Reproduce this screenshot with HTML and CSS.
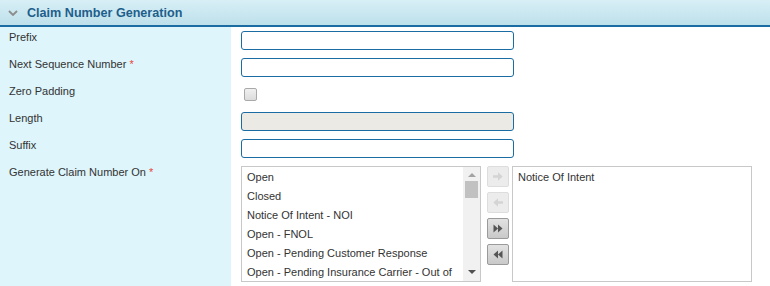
FILE: index.html
```html
<!DOCTYPE html>
<html lang="en">
<head>
  <meta charset="UTF-8">
  <title>Claim Number Generation</title>
  <link rel="stylesheet" href="styles.css">
</head>
<body>
  <div class="panel">
    <div class="panel-head">
      <svg class="chevron" width="10" height="6" viewBox="0 0 10 6"><path d="M1 1 L5 5 L9 1" fill="none" stroke="#8c8c8c" stroke-width="1.8"/></svg>
      <span class="panel-title">Claim Number Generation</span>
    </div>

    <div class="panel-body">
      <div class="row">
        <div class="label">Prefix</div>
        <div class="field"><input type="text" class="text-input"></div>
      </div>
      <div class="row">
        <div class="label">Next Sequence Number <span class="req">*</span></div>
        <div class="field"><input type="text" class="text-input"></div>
      </div>
      <div class="row">
        <div class="label">Zero Padding</div>
        <div class="field"><span class="checkbox"></span></div>
      </div>
      <div class="row">
        <div class="label">Length</div>
        <div class="field"><input type="text" class="text-input disabled" disabled></div>
      </div>
      <div class="row">
        <div class="label">Suffix</div>
        <div class="field"><input type="text" class="text-input"></div>
      </div>
      <div class="row last">
        <div class="label">Generate Claim Number On <span class="req">*</span></div>
        <div class="field picker">
          <div class="listbox">
            <ul class="items">
              <li>Open</li>
              <li>Closed</li>
              <li>Notice Of Intent - NOI</li>
              <li>Open - FNOL</li>
              <li>Open - Pending Customer Response</li>
              <li>Open - Pending Insurance Carrier - Out of</li>
            </ul>
            <div class="scrollbar">
              <span class="arrow-up"></span>
              <span class="thumb"></span>
              <span class="arrow-down"></span>
            </div>
          </div>

          <div class="move-buttons">
            <button class="move-btn" disabled>
              <svg width="10" height="9" viewBox="0 0 10 9"><path d="M0 3.2 H5 V0.3 L9.7 4.5 L5 8.7 V5.8 H0 Z" fill="#d4d4d4"/></svg>
            </button>
            <button class="move-btn" disabled>
              <svg width="10" height="9" viewBox="0 0 10 9"><path d="M10 3.2 H5 V0.3 L0.3 4.5 L5 8.7 V5.8 H10 Z" fill="#d4d4d4"/></svg>
            </button>
            <button class="move-btn active">
              <svg width="10" height="9" viewBox="0 0 10 9"><path d="M0.5 0.5 L5 4.5 L0.5 8.5 Z M5 0.5 L9.5 4.5 L5 8.5 Z" fill="#555"/></svg>
            </button>
            <button class="move-btn active">
              <svg width="10" height="9" viewBox="0 0 10 9"><path d="M9.5 0.5 L5 4.5 L9.5 8.5 Z M5 0.5 L0.5 4.5 L5 8.5 Z" fill="#555"/></svg>
            </button>
          </div>

          <div class="listbox selected">
            <ul class="items">
              <li>Notice Of Intent</li>
            </ul>
          </div>
        </div>
      </div>
    </div>
  </div>
</body>
</html>
```

FILE: styles.css
```css
body {
  margin: 0;
  font-family: Arial, "Liberation Sans", sans-serif;
  font-size: 11px;
  color: #333;
  background: #fff;
}
.panel-head {
  height: 25px;
  display: flex;
  align-items: center;
  background: linear-gradient(#d8eff6, #bde0eb);
  border-bottom: 2px solid #1a6ca2;
}
.chevron {
  margin-left: 8px;
  margin-right: 9px;
  margin-top: 1px;
}
.panel-title {
  font-size: 12.6px;
  font-weight: bold;
  color: #1e5f8c;
}
.row {
  display: flex;
  height: 27px;
}
.row.last {
  height: 124px;
}
.label {
  width: 231px;
  flex-shrink: 0;
  box-sizing: border-box;
  padding: 4px 9px 0;
  background: #ddf5fb;
}
.req {
  color: #e8453c;
}
.field {
  padding: 4px 10px 0;
}
.text-input {
  display: block;
  box-sizing: border-box;
  width: 273px;
  height: 19px;
  margin: 0;
  border: 1px solid #1a6ca2;
  border-radius: 3px;
  background: #fff;
  font: inherit;
}
.text-input.disabled {
  background: #ebeae4;
}
.checkbox {
  display: block;
  width: 11px;
  height: 11px;
  margin: 3px 0 0 3px;
  border: 1px solid #a9a9a9;
  border-radius: 2px;
  background: linear-gradient(#f0f0f0, #dcdcdc);
}
.picker {
  display: flex;
  align-items: flex-start;
}
.listbox {
  display: flex;
  box-sizing: border-box;
  width: 240px;
  height: 116px;
  border: 1px solid #c8c8c8;
  background: #fff;
  overflow: hidden;
}
.listbox.selected {
  width: 240px;
  margin-left: 3px;
}
.items {
  flex: 1;
  list-style: none;
  margin: 0;
  padding: 1px 0 0;
  overflow: hidden;
}
.items li {
  height: 19px;
  line-height: 19px;
  padding-left: 5px;
  white-space: nowrap;
}
.scrollbar {
  width: 17px;
  flex-shrink: 0;
  display: flex;
  flex-direction: column;
  align-items: center;
  background: #f1f1f1;
}
.arrow-up {
  margin-top: 6px;
  border-left: 4px solid transparent;
  border-right: 4px solid transparent;
  border-bottom: 4px solid #a3a3a3;
}
.thumb {
  width: 13px;
  height: 17px;
  margin-top: 4px;
  background: #c1c1c1;
}
.arrow-down {
  margin-top: auto;
  margin-bottom: 7px;
  border-left: 4px solid transparent;
  border-right: 4px solid transparent;
  border-top: 4px solid #505050;
}
.move-buttons {
  display: flex;
  flex-direction: column;
  gap: 5px;
  margin-left: 6px;
}
.move-btn {
  width: 22px;
  height: 21px;
  padding: 0;
  display: flex;
  align-items: center;
  justify-content: center;
  border: 1px solid #dddddd;
  border-radius: 2px;
  background: #ececec;
}
.move-btn.active {
  border-color: #9a9a9a;
  background: linear-gradient(#e2e2e2, #c9c9c9);
}
```
